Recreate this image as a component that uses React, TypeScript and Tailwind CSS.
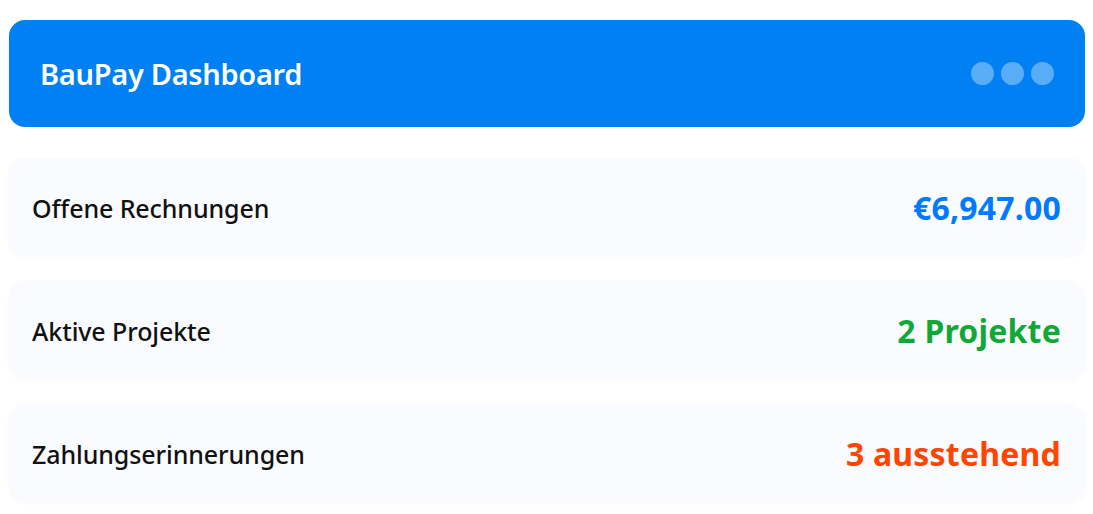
const rows = [
  { label: "Offene Rechnungen", value: "€6,947.00", color: "text-[#007aff]" },
  { label: "Aktive Projekte", value: "2 Projekte", color: "text-[#12a837]" },
  { label: "Zahlungserinnerungen", value: "3 ausstehend", color: "text-[#ff4500]" },
];

export default function App() {
  return (
    <div className="min-h-screen bg-white px-[9px] pt-[20px] pr-[8px] font-['Noto_Sans',sans-serif]">
      <div className="flex flex-col gap-[31px]">
        <header className="h-[107px] rounded-[16px] bg-[#0080f2] flex items-center justify-between pl-[31px] pr-[31px]">
          <h1 className="text-[29px] font-semibold text-white tracking-[-0.3px]">BauPay Dashboard</h1>
          <div className="flex gap-[7px]">
            <span className="w-[23px] h-[23px] rounded-full bg-white/35" />
            <span className="w-[23px] h-[23px] rounded-full bg-white/35" />
            <span className="w-[23px] h-[23px] rounded-full bg-white/35" />
          </div>
        </header>
        <div className="flex flex-col gap-[25px]">
          {rows.map((r) => (
            <div
              key={r.label}
              className="h-[98px] rounded-[16px] bg-[#fafbfe] shadow-[0_1px_4px_rgba(0,0,0,0.03)] flex items-center justify-between pl-[23px] pr-[24px]"
            >
              <span className="text-[25px] font-medium text-[#111] tracking-[-0.1px] mt-[3px]">{r.label}</span>
              <span className={`text-[32px] font-bold tracking-[0.2px] mt-[1px] ${r.color}`}>{r.value}</span>
            </div>
          ))}
        </div>
      </div>
    </div>
  );
}
